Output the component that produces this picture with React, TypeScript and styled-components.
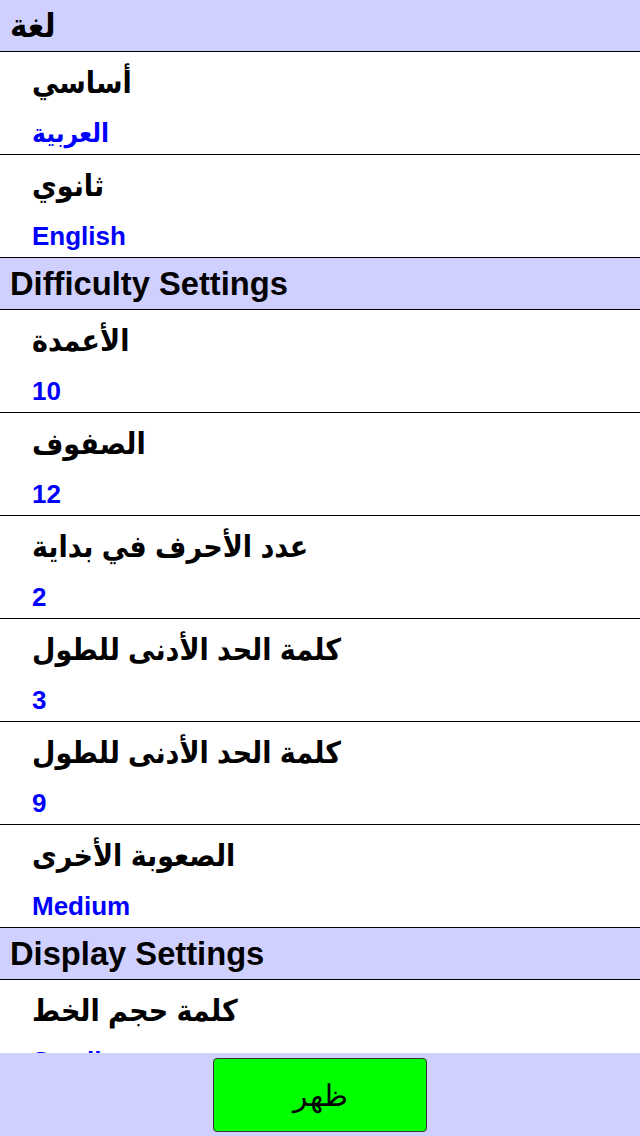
import { createGlobalStyle, styled } from 'styled-components';

const fontStack = `'Liberation Sans', 'DejaVu Sans Condensed', 'DejaVu Sans', sans-serif`;

const GlobalStyle = createGlobalStyle`
  html, body {
    margin: 0;
    padding: 0;
    background: #ffffff;
    font-family: ${fontStack};
  }
`;

const Page = styled.div`
  padding-bottom: 83px;
`;

const SectionHeader = styled.div`
  height: 52px;
  box-sizing: border-box;
  line-height: 52px;
  padding: 0 10px;
  background: #d0d0ff;
  border-bottom: 1px solid #000;
  font-size: 32.7px;
  font-weight: bold;
  color: #000;
  white-space: nowrap;
`;

const Item = styled.div`
  height: 103px;
  box-sizing: border-box;
  padding: 7px 32px 0;
  border-bottom: 1px solid #000;
  display: flex;
  flex-direction: column;
  align-items: flex-start;
`;

const ItemTitle = styled.div`
  font-size: 30px;
  font-weight: bold;
  line-height: 48px;
  color: #000;
  direction: rtl;
`;

const ItemValue = styled.div`
  font-size: 26px;
  font-weight: bold;
  line-height: 40px;
  margin-top: 6px;
  color: #0000ff;
`;

const BottomBar = styled.div`
  position: fixed;
  left: 0;
  right: 0;
  bottom: 0;
  height: 83px;
  background: #d0d0ff;
  display: flex;
  justify-content: center;
  align-items: flex-start;
  padding-top: 5px;
  box-sizing: border-box;
`;

const ShowButton = styled.button`
  width: 214px;
  height: 74px;
  background: #00ff00;
  border: 1px solid #333;
  border-radius: 4px;
  font-family: 'DejaVu Serif', 'Liberation Serif', serif;
  font-size: 30px;
  color: #000;
  cursor: pointer;
`;

type Row = { title: string; value: string };
type Section = { name: string; rows: Row[] };

const sections: Section[] = [
  {
    name: 'لغة',
    rows: [
      { title: 'أساسي', value: 'العربية' },
      { title: 'ثانوي', value: 'English' },
    ],
  },
  {
    name: 'Difficulty Settings',
    rows: [
      { title: 'الأعمدة', value: '10' },
      { title: 'الصفوف', value: '12' },
      { title: 'عدد الأحرف في بداية', value: '2' },
      { title: 'كلمة الحد الأدنى للطول', value: '3' },
      { title: 'كلمة الحد الأدنى للطول', value: '9' },
      { title: 'الصعوبة الأخرى', value: 'Medium' },
    ],
  },
  {
    name: 'Display Settings',
    rows: [{ title: 'كلمة حجم الخط', value: 'Small' }],
  },
];

const App = (): JSX.Element => {
  return (
    <Page>
      <GlobalStyle />
      {sections.map((s) => (
        <div key={s.name}>
          <SectionHeader>{s.name}</SectionHeader>
          {s.rows.map((r, i) => (
            <Item key={i}>
              <ItemTitle>{r.title}</ItemTitle>
              <ItemValue>{r.value}</ItemValue>
            </Item>
          ))}
        </div>
      ))}
      <BottomBar>
        <ShowButton>ظهر</ShowButton>
      </BottomBar>
    </Page>
  );
};

export default App;
